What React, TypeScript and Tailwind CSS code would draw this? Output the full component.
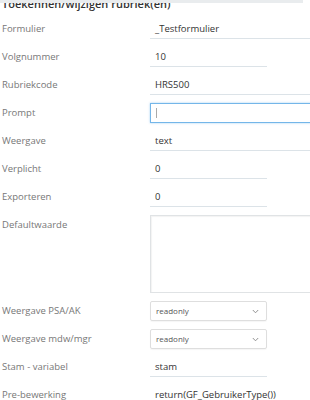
import React from "react";

const font = { fontFamily: '"Open Sans", "Noto Sans", sans-serif' };

function Label({ children }: { children: React.ReactNode }) {
  return (
    <div className="w-[150px] shrink-0 pl-[2px] h-[20px] leading-[20px] text-[9.5px] text-[#777]">
      {children}
    </div>
  );
}

function Underlined({ value, short }: { value: string; short?: boolean }) {
  return (
    <div
      className={`${short ? "w-[117px]" : "w-[180px]"} shrink-0 h-[20px] leading-[19px] border-b border-[#dce3e8] pl-[5px] text-[9.5px] text-[#333]`}
    >
      {value}
    </div>
  );
}

function Chevron() {
  return (
    <svg width="7" height="5" viewBox="0 0 7 5" className="text-[#888]">
      <path d="M0.8 1 L3.5 3.8 L6.2 1" fill="none" stroke="currentColor" strokeWidth="0.9" />
    </svg>
  );
}

function Select({ value }: { value: string }) {
  return (
    <div className="w-[117px] shrink-0 h-[20px] border border-[#dedede] rounded-[2px] shadow-[0_1px_1px_rgba(0,0,0,0.04)] flex items-center justify-between pl-[5px] pr-[7px] text-[8px] text-[#555]">
      <span>{value}</span>
      <Chevron />
    </div>
  );
}

export default function App() {
  return (
    <div className="relative w-[310px] h-[400px] overflow-hidden bg-white" style={font}>
      <div className="absolute top-0 left-0 w-[303px] h-[3px] bg-[#e9ecee]" />
      <div className="-mt-[3px] pl-[2px] h-[14px] text-[11px] font-semibold text-[#333] leading-[14px]">
        Toekennen/wijzigen rubriek(en)
      </div>
      <div className="flex flex-col gap-[8px] mt-[8px]">
        <div className="flex items-start">
          <Label>Formulier</Label>
          <Underlined value="_Testformulier" />
        </div>
        <div className="flex items-start">
          <Label>Volgnummer</Label>
          <Underlined value="10" short />
        </div>
        <div className="flex items-start">
          <Label>Rubriekcode</Label>
          <Underlined value="HRS500" />
        </div>
        <div className="flex items-start">
          <Label>Prompt</Label>
          <div className="w-[180px] shrink-0 h-[20px] border border-[#74b6e9] shadow-[0_0_2px_rgba(102,175,233,0.6)] flex items-center pl-[5px]">
            <span className="w-px h-[10px] bg-[#aaa]" />
          </div>
        </div>
        <div className="flex items-start">
          <Label>Weergave</Label>
          <Underlined value="text" />
        </div>
        <div className="flex items-start">
          <Label>Verplicht</Label>
          <Underlined value="0" short />
        </div>
        <div className="flex items-start">
          <Label>Exporteren</Label>
          <Underlined value="0" short />
        </div>
        <div className="flex items-start">
          <Label>Defaultwaarde</Label>
          <div className="w-[180px] shrink-0 h-[78px] border border-[#e0e3e5] shadow-[inset_1px_1px_1px_rgba(0,0,0,0.05)]" />
        </div>
        <div className="flex items-start">
          <Label>Weergave PSA/AK</Label>
          <Select value="readonly" />
        </div>
        <div className="flex items-start">
          <Label>Weergave mdw/mgr</Label>
          <Select value="readonly" />
        </div>
        <div className="flex items-start">
          <Label>Stam - variabel</Label>
          <Underlined value="stam" short />
        </div>
        <div className="flex items-start">
          <Label>Pre-bewerking</Label>
          <Underlined value="return(GF_GebruikerType())" />
        </div>
      </div>
    </div>
  );
}
